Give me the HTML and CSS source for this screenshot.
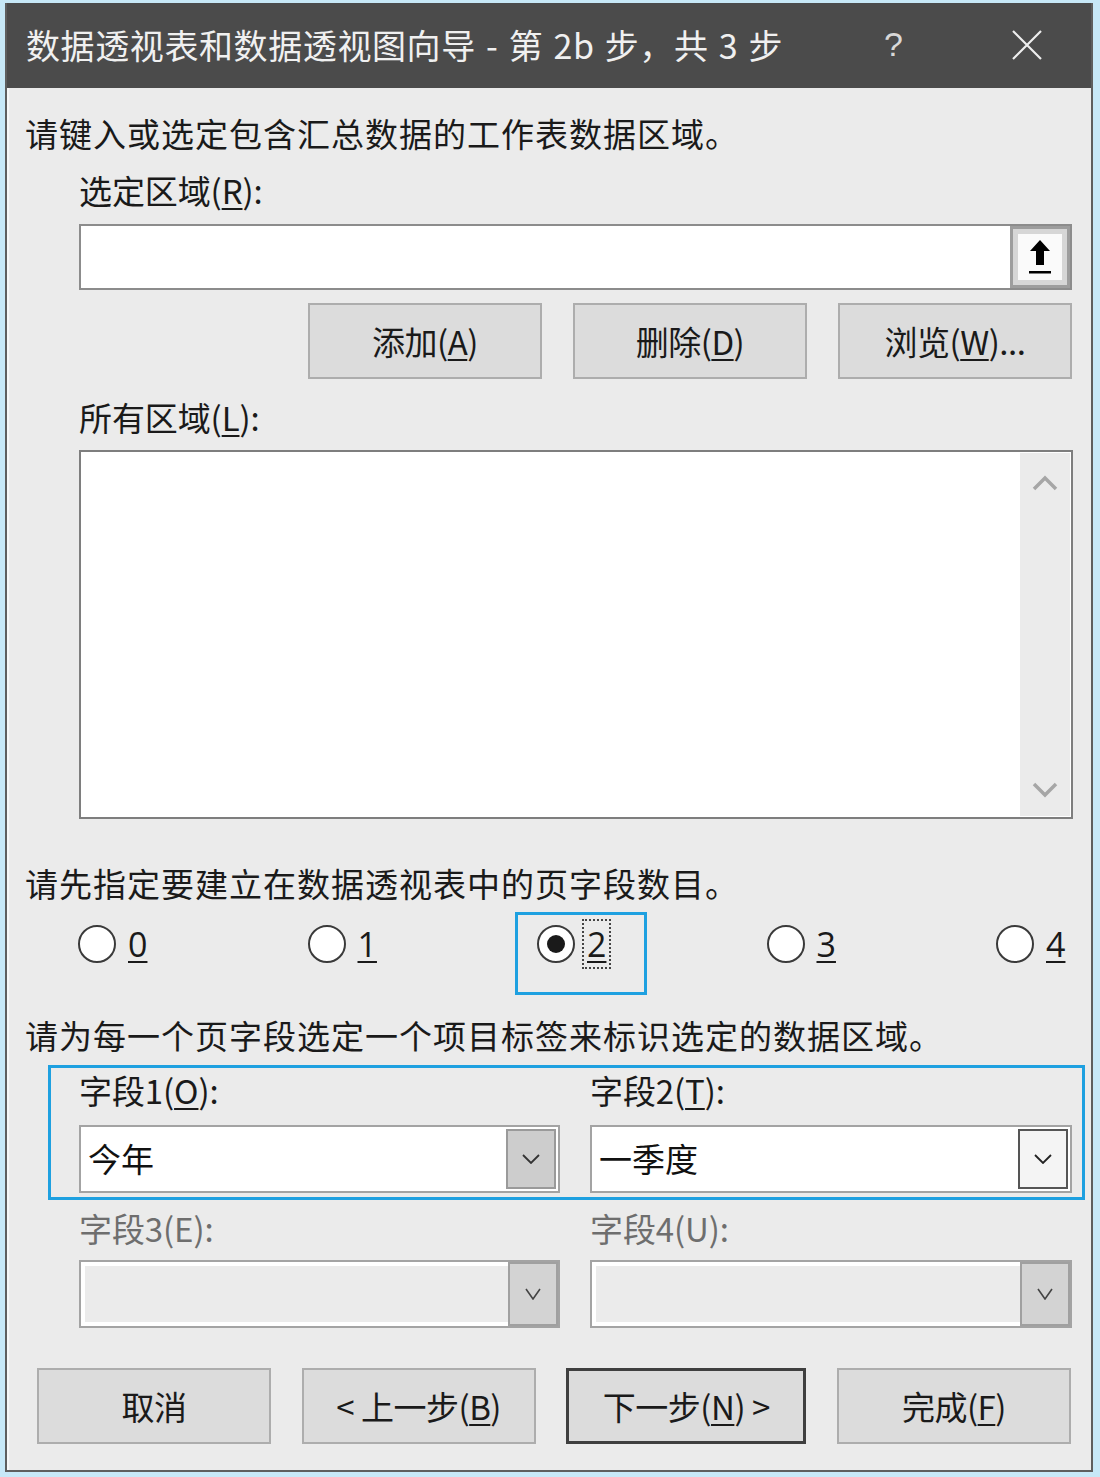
FILE: index.html
```html
<!DOCTYPE html>
<html lang="zh-CN">
<head>
<meta charset="utf-8">
<title>数据透视表和数据透视图向导</title>
<link rel="stylesheet" href="styles.css">
</head>
<body>
<div class="dialog">
  <div class="titlebar">
    <span class="title">数据透视表和数据透视图向导 - 第 2b 步，共 3 步</span>
    <span class="help">?</span>
    <span class="close"><svg width="32" height="32" viewBox="0 0 32 32"><path d="M2 2 L30 30 M30 2 L2 30" stroke="#eeeeee" stroke-width="2.2" fill="none"/></svg></span>
  </div>
  <div class="content">
    <p class="desc first">请键入或选定包含汇总数据的工作表数据区域。</p>
    <p class="label indent l-range">选定区域(<u>R</u>):</p>
    <div class="rangebox indent">
      <div class="range-input"></div>
      <div class="collapse">
        <div class="collapse-inner">
          <svg width="28" height="40" viewBox="0 0 28 40"><path d="M14 3 L4 14 L10 14 L10 28 L18 28 L18 14 L24 14 Z" fill="#000"/><rect x="3" y="34" width="22" height="2.5" fill="#000"/></svg>
        </div>
      </div>
    </div>
    <div class="btnrow">
      <div class="btn">添加(<u>A</u>)</div>
      <div class="btn">删除(<u>D</u>)</div>
      <div class="btn">浏览(<u>W</u>)...</div>
    </div>
    <p class="label indent l-all">所有区域(<u>L</u>):</p>
    <div class="listbox indent">
      <div class="list-area"></div>
      <div class="scrollbar">
        <svg width="26" height="16" viewBox="0 0 26 16"><path d="M2 14 L13 3 L24 14" stroke="#a6a6a6" stroke-width="3.5" fill="none"/></svg>
        <svg width="26" height="16" viewBox="0 0 26 16"><path d="M2 2 L13 13 L24 2" stroke="#a6a6a6" stroke-width="3.5" fill="none"/></svg>
      </div>
    </div>
    <p class="desc d2">请先指定要建立在数据透视表中的页字段数目。</p>
    <div class="radios">
      <div class="radio"><span class="circle"></span><span class="rlabel"><u>0</u></span></div>
      <div class="radio"><span class="circle"></span><span class="rlabel"><u>1</u></span></div>
      <div class="radio focused"><span class="circle checked"></span><span class="rlabel dotted"><u>2</u></span></div>
      <div class="radio"><span class="circle"></span><span class="rlabel"><u>3</u></span></div>
      <div class="radio"><span class="circle"></span><span class="rlabel"><u>4</u></span></div>
    </div>
    <p class="desc d3">请为每一个页字段选定一个项目标签来标识选定的数据区域。</p>
    <div class="fieldbox">
      <div class="field">
        <p class="label">字段1(<u>O</u>):</p>
        <div class="combo">
          <span class="combo-text">今年</span>
          <span class="arrow"><svg width="18" height="10" viewBox="0 0 18 10"><path d="M1 1 L9 9 L17 1" stroke="#333" stroke-width="1.8" fill="none"/></svg></span>
        </div>
      </div>
      <div class="field">
        <p class="label">字段2(<u>T</u>):</p>
        <div class="combo">
          <span class="combo-text">一季度</span>
          <span class="arrow hot"><svg width="18" height="10" viewBox="0 0 18 10"><path d="M1 1 L9 9 L17 1" stroke="#222" stroke-width="1.8" fill="none"/></svg></span>
        </div>
      </div>
    </div>
    <div class="fields-plain">
      <div class="field">
        <p class="label disabled">字段3(E):</p>
        <div class="combo off">
          <span class="combo-text"></span>
          <span class="arrow"><svg width="18" height="12" viewBox="0 0 18 12"><path d="M2 1 L9 11 L16 1" stroke="#444" stroke-width="1.6" fill="none"/></svg></span>
        </div>
      </div>
      <div class="field">
        <p class="label disabled">字段4(U):</p>
        <div class="combo off">
          <span class="combo-text"></span>
          <span class="arrow"><svg width="18" height="12" viewBox="0 0 18 12"><path d="M2 1 L9 11 L16 1" stroke="#444" stroke-width="1.6" fill="none"/></svg></span>
        </div>
      </div>
    </div>
    <div class="footer">
      <div class="btn">取消</div>
      <div class="btn">&lt; 上一步(<u>B</u>)</div>
      <div class="btn default">下一步(<u>N</u>) &gt;</div>
      <div class="btn">完成(<u>F</u>)</div>
    </div>
  </div>
</div>
</body>
</html>
```

FILE: styles.css
```css
* { box-sizing: border-box; }
html, body { margin: 0; padding: 0; }
body {
  width: 1100px;
  height: 1477px;
  background: #c7e8f7;
  font-family: "Noto Sans CJK SC", "Noto Sans", sans-serif;
  color: #1a1a1a;
  overflow: hidden;
}
.dialog {
  margin: 3px 0 0 5px;
  width: 1088px;
  height: 1469px;
  border: 2px solid #5e5e5e;
  border-top: none;
  background: #ebebeb;
  display: flex;
  flex-direction: column;
}
.titlebar {
  height: 85px;
  background: #4b4b4b;
  color: #f0f0f0;
  display: flex;
  align-items: center;
  padding-left: 19px;
  padding-bottom: 2px;
  flex: none;
}
.title {
  font-size: 34px;
  letter-spacing: 0.6px;
  word-spacing: 2px;
  flex: 1;
  line-height: 44px;
  white-space: nowrap;
}
.help {
  font-family: "Liberation Sans", sans-serif;
  font-size: 34px;
  font-weight: 300;
  color: #d8d8d8;
  margin-right: 108px;
}
.close { display: flex; margin-right: 48px; }
.content {
  flex: 1;
  display: flex;
  flex-direction: column;
  border-left: 2px solid #f6f6f6;
  min-width: 0;
}
p { margin: 0; }
u { text-decoration: underline; text-decoration-thickness: 2px; text-underline-offset: 4px; }
.desc {
  font-size: 33px;
  line-height: 44px;
  padding-left: 16px;
  letter-spacing: 1px;
  white-space: nowrap;
}
.desc.first { margin-top: 23px; }
.label {
  font-size: 33px;
  line-height: 44px;
  letter-spacing: -0.1px;
  white-space: nowrap;
}
.indent { margin-left: 70px; margin-right: 19px; }
.l-range { margin-top: 13px; }
.rangebox {
  margin-top: 12px;
  height: 66px;
  border: 2px solid #8c8c8c;
  background: #fff;
  display: flex;
}
.range-input { flex: 1; }
.collapse {
  width: 60px;
  border: 3px solid #9d9d9d;
  background: #d6d6d6;
  padding: 5px;
  margin: 0;
}
.collapse-inner {
  height: 100%;
  background: #fafafa;
  display: flex;
  align-items: center;
  justify-content: center;
}
.btnrow {
  margin-top: 13px;
  display: flex;
  justify-content: flex-end;
  gap: 31px;
  padding-right: 19px;
}
.btn {
  width: 234px;
  height: 76px;
  background: #dcdcdc;
  border: 2px solid #adadad;
  font-size: 33px;
  display: flex;
  align-items: center;
  justify-content: center;
  letter-spacing: -0.5px;
  color: #1a1a1a;
  white-space: nowrap;
}
.l-all { margin-top: 16px; }
.listbox {
  margin-top: 11px;
  height: 369px;
  border: 2px solid #7e7e7e;
  background: #fff;
  display: flex;
  margin-right: 18px;
}
.list-area { flex: 1; }
.scrollbar {
  width: 50px;
  margin: 1px 1px 1px 0;
  background: #ebebeb;
  display: flex;
  flex-direction: column;
  justify-content: space-between;
  align-items: center;
  padding: 22px 0 18px;
}
.desc.d2 { margin-top: 42px; }
.radios {
  margin-top: 7px;
  height: 77px;
  display: grid;
  grid-template-columns: repeat(4, 229.5px) 1fr;
  padding-left: 69px;
}
.radio {
  position: relative;
  display: flex;
  align-items: center;
  height: 38px;
  margin-top: 13px;
  align-self: start;
  justify-self: start;
}
.circle {
  width: 38px;
  height: 38px;
  border-radius: 50%;
  border: 2.5px solid #3a3a3a;
  background: #fff;
  display: flex;
  align-items: center;
  justify-content: center;
  flex: none;
}
.circle.checked::before {
  content: "";
  width: 18px;
  height: 18px;
  border-radius: 50%;
  background: #1a1a1a;
}
.rlabel {
  margin-left: 12px;
  font-family: "Open Sans", "Noto Sans", sans-serif;
  font-size: 34px;
  line-height: 44px;
  color: #1a1a1a;
}
.rlabel.dotted {
  margin-left: 10px;
  padding: 0 2px;
  outline: 2px dotted #444;
  outline-offset: 1px;
}
.radio.focused::after {
  content: "";
  position: absolute;
  left: -22px;
  top: -13px;
  width: 126px;
  height: 77px;
  border: 3px solid #1ea0e0;
}
.desc.d3 { margin-top: 24px; }
.fieldbox {
  margin: 8px 6px 0 39px;
  height: 135px;
  border: 3px solid #1ea0e0;
  display: grid;
  grid-template-columns: 481px 482px;
  column-gap: 30px;
  padding-left: 28px;
}
.field { display: flex; flex-direction: column; }
.field .combo { margin-top: 13px; }
.fields-plain {
  margin-top: 6px;
  display: grid;
  grid-template-columns: 481px 482px;
  column-gap: 30px;
  padding-left: 70px;
}
.fields-plain .combo { margin-top: 10px; }
.label.disabled { color: #6e6e6e; }
.combo {
  height: 68px;
  border: 2px solid #a3a3a3;
  background: #fff;
  display: flex;
  align-items: stretch;
  padding: 1px;
}
.combo-text {
  flex: 1;
  font-size: 33px;
  line-height: 60px;
  padding-left: 6px;
  color: #111;
}
.arrow {
  width: 50px;
  background: #cdcdcd;
  border: 2px solid #9a9a9a;
  display: flex;
  align-items: center;
  justify-content: center;
  margin: 1px 1px 1px 0;
}
.arrow.hot { background: #f4f4f4; border-color: #555; }
.combo.off { padding: 0; }
.combo.off .combo-text {
  background: #ebebeb;
  border: 4px solid #fff;
  border-right: none;
}
.combo.off .arrow {
  background: #d3d3d3;
  border-color: #a0a0a0;
  margin: 0;
}
.footer {
  margin-top: 40px;
  display: flex;
  justify-content: space-between;
  padding: 0 20px 0 28px;
}
.btn.default { width: 240px; border: 3px solid #3f3f3f; }
```
